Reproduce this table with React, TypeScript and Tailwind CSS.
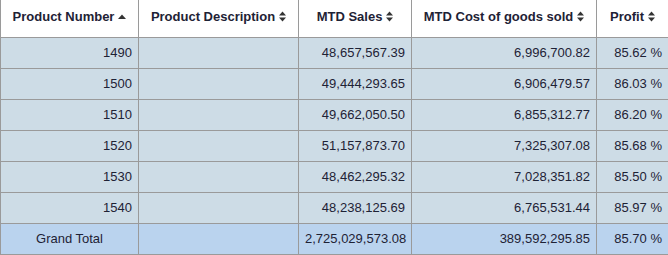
import React from "react";

const SortBoth = () => (
  <svg width="7" height="11" viewBox="0 0 7 11" className="inline-block ml-[4px] align-[-1px]">
    <path d="M0 4.5 L3.5 0.5 L7 4.5 Z" fill="#333" />
    <path d="M0 6.5 L3.5 10.5 L7 6.5 Z" fill="#333" />
  </svg>
);
const SortUp = () => (
  <svg width="8" height="5" viewBox="0 0 8 5" className="inline-block ml-[4px] align-[2px]">
    <path d="M0 5 L4 0.5 L8 5 Z" fill="#333" />
  </svg>
);

const rows = [
  ["1490", "48,657,567.39", "6,996,700.82", "85.62 %"],
  ["1500", "49,444,293.65", "6,906,479.57", "86.03 %"],
  ["1510", "49,662,050.50", "6,855,312.77", "86.20 %"],
  ["1520", "51,157,873.70", "7,325,307.08", "85.68 %"],
  ["1530", "48,462,295.32", "7,028,351.82", "85.50 %"],
  ["1540", "48,238,125.69", "6,765,531.44", "85.97 %"],
];

export default function App() {
  const th = "border-x border-[#9a9a9a] h-[37px] p-0 text-center font-bold align-middle pb-[4px]";
  const td = "border border-[#9a9a9a] h-[31px] px-[6px] p-0 text-right align-middle";
  return (
    <div className="w-[668px] h-[255px] bg-white overflow-hidden" style={{ fontFamily: '"Liberation Sans", Arial, sans-serif' }}>
      <table className="table-fixed border-collapse w-[668px] text-[13px] text-[#1e2235]">
        <colgroup>
          <col className="w-[138px]" />
          <col className="w-[160px]" />
          <col className="w-[113px]" />
          <col className="w-[185px]" />
          <col className="w-[72px]" />
        </colgroup>
        <thead>
          <tr className="bg-white">
            <th className={th}>Product Number<SortUp /></th>
            <th className={th}>Product Description<SortBoth /></th>
            <th className={th}>MTD Sales<SortBoth /></th>
            <th className={th}>MTD Cost of goods sold<SortBoth /></th>
            <th className={th}>Profit<SortBoth /></th>
          </tr>
        </thead>
        <tbody>
          {rows.map((r) => (
            <tr key={r[0]} className="bg-[#cddce6]">
              <td className={td}>{r[0]}</td>
              <td className={td}></td>
              <td className={td}>{r[1]}</td>
              <td className={td}>{r[2]}</td>
              <td className={td}>{r[3]}</td>
            </tr>
          ))}
          <tr className="bg-[#bad3ee]">
            <td className={td + " !text-center"}>Grand Total</td>
            <td className={td}></td>
            <td className={td}>2,725,029,573.08</td>
            <td className={td}>389,592,295.85</td>
            <td className={td}>85.70 %</td>
          </tr>
        </tbody>
      </table>
    </div>
  );
}
